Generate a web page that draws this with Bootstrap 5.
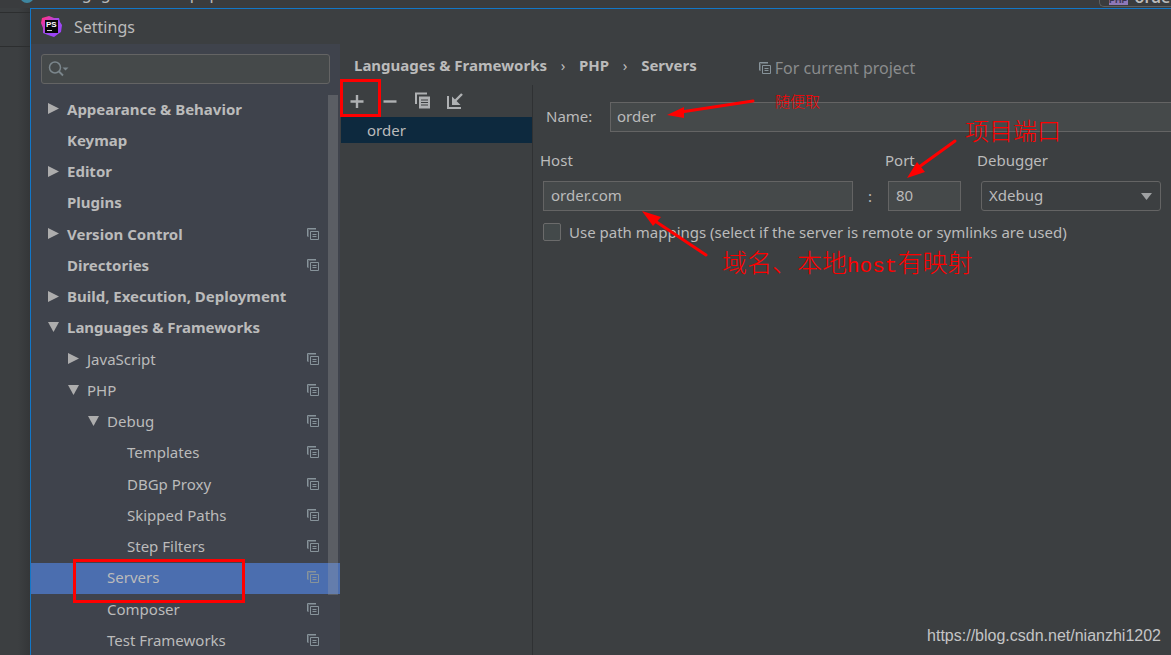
<!DOCTYPE html>
<html lang="en">
<head>
<meta charset="utf-8">
<meta name="viewport" content="width=device-width, initial-scale=1">
<title>Settings</title>
<link href="https://cdn.jsdelivr.net/npm/bootstrap@5.3.0/dist/css/bootstrap.min.css" rel="stylesheet">
<style>
  body { background: #3c3f41; color: #bbb; font: 15px/24px "Noto Sans", "Noto Sans CJK SC", sans-serif; height: 100vh; }
  a, a:hover { color: inherit; text-decoration: none; }
  button, input, select { font: inherit; color: inherit; }

  .editor-strip { height: 8px; background: #3a3c3e; }
  .editor-path { gap: 9px; line-height: 20px; margin-top: -17px; padding-left: 5px; font-size: 16px; }
  .file-dot { width: 14px; height: 14px; border-radius: 50%; background: #3e86a0; margin-top: 6px; }
  .run-config { height: 30px; width: 72px; margin-top: -23px; border: 1px solid #5e6060; border-right: 0; border-radius: 5px 0 0 5px; padding: 9px 0 0 9px; gap: 7px; line-height: 20px; font-weight: 600; font-size: 16px; background: transparent; }
  .php-tag { background: #8e78b8; color: #3b3450; font: bold 9px/14px "Liberation Sans", sans-serif; width: 19px; height: 12px; margin-top: 6px; text-align: center; }

  .editor-edge { width: 30px; background: linear-gradient(90deg, #3c3f41 60%, #343638); }
  .edge-tab { height: 35px; margin-top: 4px; border: solid #2c2e2f; border-width: 1px 0; }

  .dialog-box { border: solid #1277c8; border-width: 1px 0 0 1px; background: #3c3f41; }
  .title-row { height: 35px; padding-left: 10px; gap: 11px; font-size: 16px; }

  .side { width: 309px; background: #3f434c; }
  .search-box { margin: 10px 10px 0; height: 30px; background: #45494a; border: 1px solid #646464; border-radius: 3px; padding-left: 6px; }
  .search-box input { background: none; border: 0; outline: 0; }
  .tree { margin-top: 10px; }
  .tree li { height: 31px; padding-right: 21px; padding-bottom: 3px; }
  .tree li:nth-child(4n+1) { height: 32px; }
  .tree a { line-height: 24px; }
  .tree svg.arrow { width: 11px; height: 11px; margin-right: 8px; }
  .tree .leaf { padding-left: 19px; }
  .lv0 { padding-left: 17px; font-weight: 700; }
  .lv1 { padding-left: 37px; }
  .lv2 { padding-left: 57px; }
  .lv3 { padding-left: 77px; }
  .tree .chosen { background: #4b6eaf; }
  .scroll-thumb { top: 51px; right: 2px; width: 10px; height: 500px; background: rgba(166,166,166,.28); }
  .copy-mark { color: #87939a; width: 12px; height: 12px; }

  .crumb-row { height: 41px; padding-left: 14px; font-weight: 700; }
  .crumb-row ol { gap: 12px; }
  .crumb-row .sep { width: 8px; text-align: center; font-weight: 400; }
  .scope-note { margin-left: 62px; gap: 4px; font-weight: 400; font-size: 16px; color: #8a8c8d; padding-top: 7px; }
  .server-list { width: 193px; border-right: 1px solid #2f3133; }
  .tools { height: 32px; padding-left: 7px; gap: 13px; }
  .tools button { width: 20px; height: 20px; background: none; border: 0; padding: 0; color: #afb1b3; line-height: 0; }
  .server-item { background: #0d293e; height: 26px; line-height: 26px; padding-left: 26px; margin-left: 1px; }

  .field { height: 30px; background: #45494a; border: 1px solid #646464; border-radius: 0; padding: 0 7px 2px; outline: 0; min-width: 0; }
  .name-row { padding: 17px 0 0 13px; }
  .name-row label { width: 64px; padding-bottom: 2px; }
  .name-row .field { border-right: 0; padding-left: 6px; }
  .host-grid { display: grid; grid-template-columns: minmax(0,1fr) 92px 184px; row-gap: 9px; padding: 16px 10px 0 7px; }
  .host-grid > div { padding-left: 3px; }
  .host-grid .colon { width: 36px; text-align: center; }
  .host-grid .host-cell { padding-right: 32px; }
  .host-grid .colon { right: -3px; top: 3px; }
  .port-field { width: 73px; }
  .pick { width: 180px; border-radius: 3px; background: #3c3f41; appearance: none; }
  .pick-arrow { right: 9px; top: 12px; width: 11px; height: 7px; }
  .map-row { padding: 9px 0 0 10px; gap: 8px; }
  .map-row input { appearance: none; width: 18px; height: 18px; margin: 0; border: 1px solid #6b6b6b; border-radius: 2px; background: #43494a; }

  .red-box { border: 3px solid #f00; pointer-events: none; z-index: 3; }
  .box-add { left: -7px; top: -12px; width: 41px; height: 38px; }
  .box-servers { left: 42px; top: -4px; width: 172px; height: 44px; }
  .red-note { color: #f00; font-weight: 300; white-space: nowrap; font-family: "Noto Sans CJK SC", sans-serif; z-index: 3; }
  .red-note tt { font: 400 21px "Liberation Mono", monospace; }
  .red-arrow { z-index: 3; fill: #f00; stroke: #f00; overflow: visible; }
  .note-name { left: 242px; top: 4px; font-size: 15px; }
  .arrow-name { left: 134px; top: 14px; width: 88px; height: 20px; }
  .note-port { left: 80px; top: -66px; font-size: 24px; line-height: 30px; }
  .arrow-port { left: 22px; top: -42px; width: 50px; height: 40px; }
  .note-host { left: 189px; top: 114px; font-size: 25px; line-height: 30px; }
  .arrow-host { left: 109px; top: 79px; width: 66px; height: 46px; }
  .watermark { right: 10px; bottom: 7px; font: 16px/24px "Liberation Sans", sans-serif; color: #c4c5c6; }
</style>
</head>
<body class="d-flex flex-column overflow-hidden position-relative">

<svg class="d-none">
  <symbol id="right" viewBox="0 0 11 11"><path d="M0 0 11 5.500 0 11z" fill="#adadad"/></symbol>
  <symbol id="down" viewBox="0 0 11 11"><path d="M0 0H11L5.500 10z" fill="#adadad"/></symbol>
  <symbol id="copy" viewBox="0 0 12 12"><path d="M.5 8.500V.5H9M3.500 3.500h8v8h-8zM5.500 6.500h4M5.500 8.500h4" fill="none" stroke="currentColor"/><path d="M1.500 9V1.500H9" fill="none" stroke="currentColor" opacity=".5"/></symbol>
</svg>

<header class="editor-strip d-flex justify-content-between overflow-hidden flex-shrink-0">
  <div class="editor-path d-flex"><span>/</span><span class="file-dot"></span><span>Changegou / index.php</span></div>
  <button class="run-config d-flex" type="button"><span class="php-tag">PHP</span><span>order</span></button>
</header>

<div class="d-flex flex-grow-1 overflow-hidden">
  <div class="editor-edge flex-shrink-0"><div class="edge-tab"></div></div>

  <section class="dialog-box flex-grow-1 d-flex flex-column">
    <div class="title-row d-flex align-items-center flex-shrink-0">
      <svg width="22" height="22" viewBox="0 0 22 22">
        <defs><linearGradient id="brand" x1="0" y1="0" x2="1" y2="1"><stop offset=".1" stop-color="#ff318c"/><stop offset=".5" stop-color="#9a4df5"/><stop offset="1" stop-color="#a13cf7"/></linearGradient></defs>
        <path d="M1 2 8 0 13 2 18 2 19 6 21 9 20 16 17 18 13 21 7 19 2 17 2 12 0 7z" fill="url(#brand)"/>
        <rect x="4" y="4" width="13" height="13" fill="#080808"/>
        <text x="5" y="11" font-family="Liberation Sans, sans-serif" font-size="8" font-weight="700" fill="#fff">PS</text>
        <path d="M6 14.500h5" stroke="#ccc"/>
      </svg>
      <span>Settings</span>
    </div>

    <div class="d-flex flex-grow-1">
      <nav class="side position-relative flex-shrink-0" aria-label="Settings pages">
        <label class="search-box d-flex align-items-center">
          <svg width="22" height="18" viewBox="0 0 22 18"><circle cx="7" cy="7.500" r="5.500" fill="none" stroke="#7b868c" stroke-width="1.500"/><path d="M11 11.500l4 4" stroke="#7b868c" stroke-width="1.800"/><path d="M14.500 7.500h6l-3 3z" fill="#7b868c"/></svg>
          <input class="flex-grow-1" type="text" aria-label="Search settings">
        </label>
        <ul class="tree list-unstyled mb-0">
          <li class="lv0 d-flex align-items-center"><svg class="arrow"><use href="#right"/></svg><a href="#">Appearance &amp; Behavior</a></li>
          <li class="lv0 d-flex align-items-center"><a class="leaf" href="#">Keymap</a></li>
          <li class="lv0 d-flex align-items-center"><svg class="arrow"><use href="#right"/></svg><a href="#">Editor</a></li>
          <li class="lv0 d-flex align-items-center"><a class="leaf" href="#">Plugins</a></li>
          <li class="lv0 d-flex align-items-center"><svg class="arrow"><use href="#right"/></svg><a href="#">Version Control</a><svg class="copy-mark ms-auto"><use href="#copy"/></svg></li>
          <li class="lv0 d-flex align-items-center"><a class="leaf" href="#">Directories</a><svg class="copy-mark ms-auto"><use href="#copy"/></svg></li>
          <li class="lv0 d-flex align-items-center"><svg class="arrow"><use href="#right"/></svg><a href="#">Build, Execution, Deployment</a></li>
          <li class="lv0 d-flex align-items-center"><svg class="arrow"><use href="#down"/></svg><a href="#">Languages &amp; Frameworks</a></li>
          <li class="lv1 d-flex align-items-center"><svg class="arrow"><use href="#right"/></svg><a href="#">JavaScript</a><svg class="copy-mark ms-auto"><use href="#copy"/></svg></li>
          <li class="lv1 d-flex align-items-center"><svg class="arrow"><use href="#down"/></svg><a href="#">PHP</a><svg class="copy-mark ms-auto"><use href="#copy"/></svg></li>
          <li class="lv2 d-flex align-items-center"><svg class="arrow"><use href="#down"/></svg><a href="#">Debug</a><svg class="copy-mark ms-auto"><use href="#copy"/></svg></li>
          <li class="lv3 d-flex align-items-center"><a class="leaf" href="#">Templates</a><svg class="copy-mark ms-auto"><use href="#copy"/></svg></li>
          <li class="lv3 d-flex align-items-center"><a class="leaf" href="#">DBGp Proxy</a><svg class="copy-mark ms-auto"><use href="#copy"/></svg></li>
          <li class="lv3 d-flex align-items-center"><a class="leaf" href="#">Skipped Paths</a><svg class="copy-mark ms-auto"><use href="#copy"/></svg></li>
          <li class="lv3 d-flex align-items-center"><a class="leaf" href="#">Step Filters</a><svg class="copy-mark ms-auto"><use href="#copy"/></svg></li>
          <li class="lv2 d-flex align-items-center chosen position-relative"><a class="leaf" href="#" aria-current="page">Servers</a><svg class="copy-mark ms-auto"><use href="#copy"/></svg><span class="red-box box-servers position-absolute"></span></li>
          <li class="lv2 d-flex align-items-center"><a class="leaf" href="#">Composer</a><svg class="copy-mark ms-auto"><use href="#copy"/></svg></li>
          <li class="lv2 d-flex align-items-center"><a class="leaf" href="#">Test Frameworks</a><svg class="copy-mark ms-auto"><use href="#copy"/></svg></li>
        </ul>
        <div class="scroll-thumb position-absolute"></div>
      </nav>

      <main class="flex-grow-1 d-flex flex-column">
        <div class="crumb-row d-flex align-items-center">
          <ol class="list-unstyled d-flex mb-0">
            <li><a href="#">Languages &amp; Frameworks</a></li><li class="sep">›</li>
            <li><a href="#">PHP</a></li><li class="sep">›</li>
            <li>Servers</li>
          </ol>
          <span class="scope-note d-flex align-items-center"><svg class="copy-mark"><use href="#copy"/></svg>For current project</span>
        </div>

        <div class="d-flex flex-grow-1">
          <div class="server-list flex-shrink-0">
            <div class="tools d-flex align-items-center">
              <button type="button" class="position-relative" aria-label="Add"><svg width="20" height="20"><path d="M10 4v13M3.500 10.500h13" stroke="currentColor" stroke-width="2.400"/></svg><span class="red-box box-add position-absolute"></span></button>
              <button type="button" aria-label="Remove"><svg width="20" height="20"><path d="M3.500 10.500h13" stroke="currentColor" stroke-width="2.400"/></svg></button>
              <button type="button" aria-label="Copy"><svg width="20" height="20"><path d="M3 13V2.500h11" fill="none" stroke="currentColor" stroke-width="2"/><path d="M6 5.500h11v12H6z" fill="currentColor"/><path d="M8 9h7M8 11.500h7M8 14h7" stroke="#3c3f41"/></svg></button>
              <button type="button" aria-label="Import"><svg width="20" height="20"><path d="M2 5v12h13" fill="none" stroke="currentColor" stroke-width="2"/><path d="M16 3l-7 7" stroke="currentColor" stroke-width="2.400"/><path d="M6 5.500V14h8.500z" fill="currentColor"/></svg></button>
            </div>
            <a class="server-item d-block" href="#">order</a>
          </div>

          <form class="flex-grow-1">
            <div class="name-row d-flex align-items-center position-relative">
              <label for="name">Name:</label>
              <input class="field flex-grow-1" id="name" type="text" value="order">
              <svg class="red-arrow arrow-name position-absolute" viewBox="0 0 88 20"><path d="M86 2 14 13" stroke-width="3" stroke-linecap="round"/><path d="M0 16 17 8V19z" stroke="none"/></svg>
              <span class="red-note note-name position-absolute">随便取</span>
            </div>

            <div class="host-grid position-relative">
              <label for="host">Host</label><label for="port">Port</label><label for="debugger">Debugger</label>
              <div class="host-cell d-flex position-relative"><input class="field flex-grow-1" id="host" type="text" value="order.com"><span class="colon position-absolute">:</span></div>
              <div class="position-relative">
                <input class="field port-field" id="port" type="text" value="80">
                <svg class="red-arrow arrow-port position-absolute" viewBox="0 0 50 40"><path d="M48 2 12 28" stroke-width="3" stroke-linecap="round"/><path d="M0 39 10 23 18 33z" stroke="none"/></svg>
                <span class="red-note note-port position-absolute">项目端口</span>
              </div>
              <div class="position-relative ps-1">
                <select class="field pick" id="debugger"><option>Xdebug</option><option>Zend Debugger</option></select>
                <svg class="pick-arrow position-absolute" viewBox="0 0 11 7"><path d="M0 0h11L5.500 7z" fill="#9fa1a3"/></svg>
              </div>
              <svg class="red-arrow arrow-host position-absolute" viewBox="0 0 66 46"><path d="M64 44 13 10" stroke-width="3" stroke-linecap="round"/><path d="M0 0 19 6 11 15z" stroke="none"/></svg>
              <span class="red-note note-host position-absolute">域名、本地<tt>host</tt>有映射</span>
            </div>

            <div class="map-row d-flex align-items-center">
              <input id="map" type="checkbox"><label for="map">Use path mappings (select if the server is remote or symlinks are used)</label>
            </div>
          </form>
        </div>
      </main>
    </div>
  </section>
</div>

<div class="watermark position-absolute">https://blog.csdn.net/nianzhi1202</div>
<script src="https://cdn.jsdelivr.net/npm/bootstrap@5.3.0/dist/js/bootstrap.bundle.min.js"></script>
</body>
</html>
